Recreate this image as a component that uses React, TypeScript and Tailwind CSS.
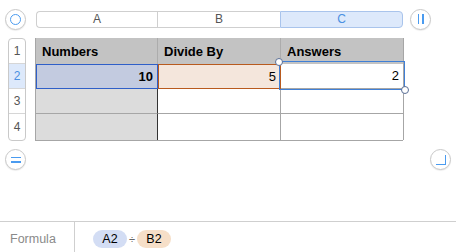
import React from 'react'

const font = { fontFamily: '"Liberation Sans", Arial, sans-serif' }

function RoundButton({ children }: { children: React.ReactNode }) {
  return (
    <div className="w-[21px] h-[21px] rounded-full border border-[#c9c9c9] bg-white shadow-[0_1px_1px_rgba(0,0,0,0.08)] flex items-center justify-center">
      {children}
    </div>
  )
}

function Handle({ className }: { className: string }) {
  return <div className={`absolute w-[8px] h-[8px] rounded-full bg-white border border-[#5a6f96] ${className}`} />
}

export default function App() {
  return (
    <div className="w-[456px] h-[252px] bg-white flex flex-col text-black" style={font}>
      {/* column headers */}
      <div className="flex items-center h-[22px] mt-[8px]">
        <div className="ml-[5px]">
          <RoundButton>
            <div className="w-[11px] h-[11px] rounded-full border-[1.5px] border-[#4a9bf0]" />
          </RoundButton>
        </div>
        <div className="ml-[10px] w-[367px] h-[17px] flex text-[12px] text-[#555]">
          <div className="w-[121px] flex items-center justify-center border border-r-0 border-[#cfcfcf] rounded-l-[4px]">A</div>
          <div className="w-[123px] flex items-center justify-center border border-r-0 border-[#cfcfcf]">B</div>
          <div className="w-[123px] flex items-center justify-center border border-[#a9c4ec] bg-[#dde9fb] text-[#4a90e2] rounded-r-[4px]">C</div>
        </div>
        <div className="ml-[7px]">
          <RoundButton>
            <div className="flex gap-[3px]">
              <div className="w-[1.5px] h-[10px] bg-[#4a9bf0]" />
              <div className="w-[1.5px] h-[10px] bg-[#4a9bf0]" />
            </div>
          </RoundButton>
        </div>
      </div>

      {/* rows */}
      <div className="flex mt-[8px]">
        <div className="ml-[8px] w-[18px] border border-[#c9c9c9] rounded-[4px] flex flex-col text-[12px] text-[#555] overflow-hidden">
          <div className="h-[25px] flex items-center justify-center border-b border-[#d6d6d6]">1</div>
          <div className="h-[25px] flex items-center justify-center border-b border-[#d6d6d6] bg-[#dde9fb] text-[#4a90e2]">2</div>
          <div className="h-[25px] flex items-center justify-center border-b border-[#d6d6d6]">3</div>
          <div className="h-[25px] flex items-center justify-center">4</div>
        </div>

        <div className="relative ml-[9px] w-[368px] grid grid-cols-[122px_123px_123px] grid-rows-[26px_25px_25px_26px] border-l border-b border-[#a6a6a6] text-[13px]">
          <div className="bg-[#c3c3c3] border-r border-[#acacac] flex items-center pl-[6px] pt-[2px] font-bold">Numbers</div>
          <div className="bg-[#c3c3c3] border-r border-[#acacac] flex items-center pl-[6px] pt-[2px] font-bold">Divide By</div>
          <div className="bg-[#c3c3c3] border-r border-[#a6a6a6] flex items-center pl-[6px] pt-[2px] font-bold">Answers</div>

          <div className="bg-[#c3cbe0] border border-[#2f5fc8] flex items-center justify-end pr-[4px] font-bold">10</div>
          <div className="bg-[#f4e6dc] border border-[#b85a1e] flex items-center justify-end pr-[4px]">5</div>
          <div className="bg-white border-r border-b border-[#a6a6a6] flex items-center justify-end pr-[4px]">2</div>

          <div className="bg-[#dcdcdc] border-r border-b border-r-[#333] border-b-[#a6a6a6]" />
          <div className="bg-white border-r border-b border-[#a6a6a6]" />
          <div className="bg-white border-r border-b border-[#a6a6a6]" />

          <div className="bg-[#dcdcdc] border-r border-r-[#333]" />
          <div className="bg-white border-r border-[#a6a6a6]" />
          <div className="bg-white border-r border-[#a6a6a6]" />

          {/* selection on C2 */}
          <div className="absolute left-[243px] top-[23px] w-[126px] h-[29px] border border-[#3f7fd6]" />
          <Handle className="left-[239px] top-[20px]" />
          <Handle className="left-[365px] top-[48px]" />
        </div>
      </div>

      {/* bottom buttons */}
      <div className="flex justify-between mt-[8px] px-[5px]">
        <RoundButton>
          <div className="flex flex-col gap-[3px]">
            <div className="w-[10px] h-[1.5px] bg-[#4a9bf0]" />
            <div className="w-[10px] h-[1.5px] bg-[#4a9bf0]" />
          </div>
        </RoundButton>
        <RoundButton>
          <div className="w-[10px] h-[10px] border-r-[1.5px] border-b-[1.5px] border-[#4a9bf0]" />
        </RoundButton>
      </div>

      <div className="flex-1" />

      {/* formula bar */}
      <div className="h-[31px] border-t border-[#cfcfcf] flex">
        <div className="w-[75px] border-r border-[#cfcfcf] flex items-center pl-[10px] text-[12.5px] text-[#8a8a8a] pt-[4px]">Formula</div>
        <div className="flex items-center pl-[18px] pt-[4px] text-[12.5px]">
          <div className="w-[34px] h-[18px] rounded-full bg-[#d3ddf4] flex items-center justify-center">A2</div>
          <div className="w-[10px] text-center text-[#666] text-[11px]">÷</div>
          <div className="w-[34px] h-[18px] rounded-full bg-[#f6dfc8] flex items-center justify-center">B2</div>
        </div>
      </div>
    </div>
  )
}
